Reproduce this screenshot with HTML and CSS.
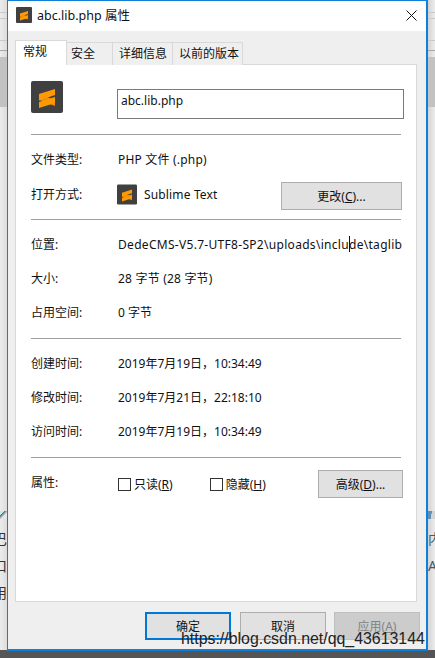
FILE: index.html
```html
<!DOCTYPE html>
<html lang="zh-CN">
<head>
<meta charset="utf-8">
<title>abc.lib.php 属性</title>
<link rel="stylesheet" href="styles.css">
</head>
<body>
<svg class="defs" width="0" height="0" aria-hidden="true">
  <symbol id="sublime" viewBox="0 0 32 32">
    <rect width="32" height="32" rx="2" fill="#404040"/>
    <path d="M8 13 24 19v6L8 19z" fill="#ec8e06"/>
    <path d="M8 13 24 8v6L8 19.5z" fill="#ff9a05"/>
    <path d="M8 21 24 16v6L8 27z" fill="#ff9a05"/>
  </symbol>
</svg>
<div class="desk">
  <div class="desk-main">
    <div class="strip strip-left">
      <i class="band b1"></i><i class="band b2"></i><i class="band b3"></i><i class="band b4"></i><i class="block"></i>
      <i class="speck speck-left"></i>
      <div class="frag frag-left">
        <span class="glyph">巴</span>
        <span class="glyph">口</span>
        <span class="glyph">用</span>
      </div>
    </div>
    <main class="window">
      <header class="titlebar">
        <svg class="title-icon"><use href="#sublime"/></svg>
        <span class="title-text">abc.lib.php 属性</span>
        <svg class="close" viewBox="0 0 11 11"><path d="M.5.5l10 10M10.5.5l-10 10" stroke="#111" stroke-width="1" fill="none"/></svg>
      </header>
      <div class="body">
        <nav class="tabs">
          <span class="tab active">常规</span>
          <span class="tab t2">安全</span>
          <span class="tab t3">详细信息</span>
          <span class="tab t4">以前的版本</span>
        </nav>
        <section class="panel">
          <div class="head">
            <svg class="big-icon"><use href="#sublime"/></svg>
            <div class="name-input">abc.lib.php</div>
          </div>
          <hr class="rule">
          <div class="group group-open">
            <div class="row"><span class="label">文件类型:</span><span class="wide">PHP 文件 (.php)</span></div>
            <div class="row row-open">
              <span class="label">打开方式:</span>
              <svg class="small-icon"><use href="#sublime"/></svg>
              <span class="app">Sublime Text</span>
              <button class="btn change">更改(<u>C</u>)...</button>
            </div>
          </div>
          <hr class="rule">
          <div class="group">
            <div class="row"><span class="label">位置:</span><span class="path">DedeCMS-V5.7-UTF8-SP2\uploads\inclu<i class="caret"></i>de\taglib</span></div>
            <div class="row"><span class="label">大小:</span><span class="wide">28 字节 (28 字节)</span></div>
            <div class="row"><span class="label">占用空间:</span><span>0 字节</span></div>
          </div>
          <hr class="rule">
          <div class="group">
            <div class="row"><span class="label">创建时间:</span><span>2019年7月19日，10:34:49</span></div>
            <div class="row"><span class="label">修改时间:</span><span>2019年7月21日，22:18:10</span></div>
            <div class="row"><span class="label">访问时间:</span><span>2019年7月19日，10:34:49</span></div>
          </div>
          <hr class="rule">
          <div class="attrs">
            <span class="label attr-label">属性:</span>
            <span class="check"><i class="box"></i>只读(<u>R</u>)</span>
            <span class="check hidden-check"><i class="box"></i>隐藏(<u>H</u>)</span>
            <button class="btn advanced">高级(<u>D</u>)...</button>
          </div>
        </section>
        <footer class="actions">
          <button class="btn dlg primary">确定</button>
          <button class="btn dlg">取消</button>
          <button class="btn dlg disabled">应用(<u>A</u>)</button>
        </footer>
      </div>
    </main>
    <div class="strip strip-right">
      <i class="band b1"></i><i class="band b2"></i><i class="band b3"></i><i class="band b4"></i><i class="block"></i>
      <i class="speck speck-right"></i>
      <div class="frag frag-right">
        <span class="glyph">内</span>
        <span class="glyph">A</span>
      </div>
    </div>
  </div>
  <div class="desk-bottom"></div>
  <div class="watermark">https://blog.csdn.net/qq_43613144</div>
</div>
</body>
</html>
```
FILE: styles.css
```css
* { box-sizing: border-box; }
html, body { margin: 0; padding: 0; }
body {
  width: 435px;
  height: 658px;
  overflow: hidden;
  background: #e9e9e9;
  font-family: "Noto Sans", "Noto Sans CJK SC", sans-serif;
  font-size: 12px;
  color: #111;
}
.defs { display: block; height: 0; }
.desk { position: relative; width: 435px; height: 658px; overflow: hidden; display: flex; flex-direction: column; }
.desk-main { display: flex; height: 650px; }
.desk-bottom { height: 8px; background: #555; }

.strip { width: 7px; height: 650px; overflow: hidden; display: flex; flex-direction: column; }
.strip-left { background: linear-gradient(90deg, #ececec, #dcdcdc); }
.strip-right { background: linear-gradient(90deg, #d4d4d4, #ececec); }
.band { display: block; height: 1px; background: #c9c9c9; flex: none; }
.b1 { margin-top: 12px; }
.b2 { margin-top: 5px; }
.b3 { margin-top: 21px; }
.b4 { margin-top: 9px; background: #a8a8a8; }
.block { display: block; flex: none; height: 50px; margin-top: 6px; background: #c2c2c2; }
.speck { display: block; flex: none; height: 8px; margin-top: 404px; }
.speck-left { background: linear-gradient(135deg, #b9f0ee 30%, #666 32%, #e6e6e6 60%); }
.speck-right { background: linear-gradient(100deg, #5d8fb8 45%, #d4d4d4 50%); }
.frag { display: flex; flex-direction: column; margin-top: 6px; color: #333; font-size: 14px; line-height: 27px; }
.frag-left { align-items: flex-end; }
.frag-right { align-items: flex-start; color: #44586a; }
.glyph { flex: none; }

.window {
  width: 421px;
  height: 651px;
  flex: none;
  background: #efefef;
  border: 1px solid #0f7fd8;
  border-width: 1px 2px 2px 1px;
  display: flex;
  flex-direction: column;
  z-index: 1;
}
.titlebar { height: 30px; background: #fff; display: flex; align-items: center; padding: 0 9px 2px 8px; flex: none; }
.title-icon { width: 16px; height: 16px; flex: none; margin-right: 5px; }
.title-text { font-size: 12.5px; flex: 1; margin-bottom: 2px; }
.close { width: 11px; height: 11px; flex: none; }

.body { flex: 1; padding: 10px 8px 0 7px; display: flex; flex-direction: column; }
.tabs { display: flex; align-items: flex-end; height: 24px; margin-bottom: -1px; position: relative; z-index: 2; }
.tab { height: 23px; line-height: 22px; white-space: nowrap; padding: 0 0 0 6px; background: #efefef; border: 1px solid #d9d9d9; border-left: 0; border-bottom: 0; }
.tab.active { height: 25px; width: 52px; background: #fff; border-left: 1px solid #d9d9d9; padding: 0 0 0 7px; }
.t2 { width: 46px; padding-left: 4px; }
.t3 { width: 60px; }
.t4 { width: 70px; }

.panel { width: 402px; height: 538px; background: #fff; border: 1px solid #d9d9d9; padding: 16px 15px 0; flex: none; }
.head { display: flex; align-items: flex-start; height: 53px; }
.big-icon { width: 32px; height: 32px; flex: none; margin-right: 54px; }
.name-input { margin-top: 8px; width: 287px; height: 30px; flex: none; border: 1px solid #7a7a7a; padding: 0 3px; line-height: 22px; margin-right: -3px; width: 287px; }
.rule { margin: 0; border: 0; height: 1px; width: 370px; background: #a0a0a0; }
.group { padding: 7px 0 9px; }
.group-open { padding-bottom: 8px; }
.row { height: 34px; display: flex; align-items: center; white-space: nowrap; }
.row-open { margin-top: 1px; }
.label { width: 87px; flex: none; }
.small-icon { width: 20px; height: 21px; flex: none; margin-left: -1px; margin-right: 7px; }
.app { flex: 1; letter-spacing: .15px; }
.wide { letter-spacing: .2px; }
.path { letter-spacing: .3px; }
.caret { display: inline-block; width: 1px; height: 16px; margin-right: -1px; background: #111; vertical-align: -3px; }

.btn { font: inherit; color: #111; background: #e1e1e1; border: 1px solid #adadad; padding: 0; }
.btn u { text-underline-offset: 1px; }
.change { width: 121px; height: 28px; flex: none; margin-top: 4px; margin-right: -1px; }
.attrs { display: flex; align-items: center; height: 28px; margin-top: 12px; }
.attr-label { align-self: flex-start; line-height: 26px; }
.check { display: flex; align-items: center; }
.box { width: 13px; height: 13px; border: 1px solid #333; background: #fff; margin-right: 3px; }
.hidden-check { margin-left: 37px; }
.advanced { width: 85px; height: 28px; margin-left: auto; margin-right: -2px; }

.actions { display: flex; justify-content: flex-end; gap: 8px; margin-top: 10px; margin-right: -2px; }
.dlg { width: 86px; height: 28px; }
.primary { border: 2px solid #0078d7; margin-right: 1px; }
.disabled { background: #ccc; border-color: #bfbfbf; color: #838383; }

.watermark { position: absolute; left: 181px; top: 629px; font-family: "Liberation Sans", sans-serif; font-size: 15.9px; line-height: 20px; color: #222; z-index: 5; white-space: nowrap; }
```
